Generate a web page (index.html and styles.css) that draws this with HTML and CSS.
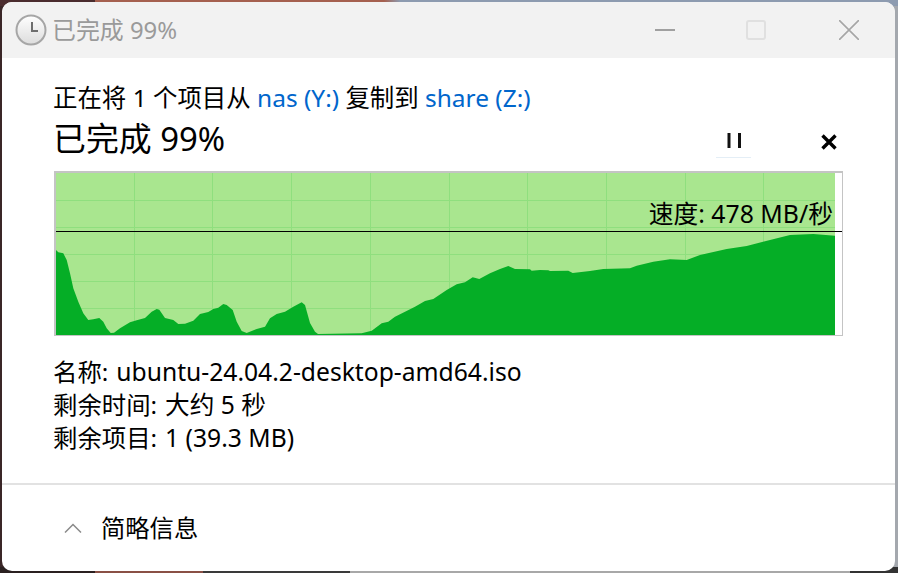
FILE: index.html
```html
<!DOCTYPE html>
<html lang="zh-CN">
<head>
<meta charset="utf-8">
<title>已完成 99%</title>
<link rel="stylesheet" href="styles.css">
</head>
<body>
<div class="window">
  <header class="titlebar">
    <svg class="clock" width="32" height="32" viewBox="0 0 32 32">
      <defs><linearGradient id="face" x1="0" y1="0" x2="0" y2="1"><stop offset="0" stop-color="#ffffff"/><stop offset="1" stop-color="#dcdcdc"/></linearGradient></defs>
      <circle cx="16" cy="16" r="14.5" fill="url(#face)" stroke="#a6a6a6" stroke-width="2"/>
      <path d="M17 8v9h6" fill="none" stroke="#6e6e6e" stroke-width="2"/>
    </svg>
    <span class="title">已完成 99%</span>
    <div class="controls">
      <svg width="20" height="20" viewBox="0 0 20 20"><path d="M0 10h20" stroke="#a0a0a0" stroke-width="2"/></svg>
      <svg class="ctl-max" width="20" height="20" viewBox="0 0 20 20"><rect x="1" y="1" width="18" height="18" rx="2" fill="none" stroke="#e0e0e0" stroke-width="2"/></svg>
      <svg width="20" height="20" viewBox="0 0 20 20"><path d="M0 0l20 20M20 0L0 20" stroke="#a6a6a6" stroke-width="1.6"/></svg>
    </div>
  </header>
  <main class="body">
    <p class="line">正在将 1 个项目从 <span class="link">nas (Y:)</span> 复制到 <span class="link">share (Z:)</span></p>
    <div class="headrow">
      <h1 class="heading">已完成 99%</h1>
      <div class="actions">
        <span class="pause"><svg width="16" height="16" viewBox="0 0 16 16"><path d="M3 0v15M13.5 0v15" stroke="#111" stroke-width="3"/></svg></span>
        <svg class="stop" width="16" height="16" viewBox="0 0 16 16"><path d="M1.5 1.5l13 13M14.5 1.5l-13 13" stroke="#000" stroke-width="3.4"/></svg>
      </div>
    </div>
    <div class="chart">
      <svg class="plot" width="786" height="162" viewBox="56 173 786 162">
        <rect x="56" y="173" width="779" height="162" fill="#a9e68f"/>
        <path d="M134.5 173V335M212.5 173V335M291.5 173V335M370.5 173V335M449.5 173V335M527.5 173V335M606.5 173V335M685.5 173V335M763.5 173V335M56 200.5H835M56 227.5H835M56 254.5H835M56 281.5H835M56 308.5H835" stroke="#8fdf7e" stroke-width="1" fill="none"/>
        <path fill="#05ae26" d="M56 250L58.3 252.3 63.3 253.3 66.7 260 70 273.3 73.3 288.3 78.3 301.7 83.3 313.3 88.3 320 93.3 319.3 99.3 318 103.3 321.7 106.7 328.3 110.7 333 114 332.7 120 328.3 130 322.3 136.7 320.3 145 318 151.7 311.7 156.7 309 159.3 309.7 165 318 173.3 320 178.3 324 185 323.7 193.3 320.7 200 314 208.3 312 213.3 309 218.3 307.7 223.3 304 226.7 305 232.7 310 236.7 321.7 241.7 331 246.7 333 256.7 329 265 326.7 270 318.3 276.7 314 285 311.7 293.3 306.7 301.7 302.3 305 305 310 323 315 331.7 318 334 361.7 333.3 371.7 330.7 381.7 323.3 388.3 321.7 395 316.7 415 306.7 425 301 433.3 299 446.7 290 456.7 284.3 465 282.3 472.7 277.3 479.3 279 490 273.3 500 269 508.3 266 515 269 530 269.3 531.7 270.7 540 270 548.3 270.3 550 271 568.3 270.7 572.7 273 590 271 603.3 269 630 268.3 636.7 265.7 653.3 261.7 670 259.3 686.7 260 700 255 726.7 249 746.7 246 770 240 790 235 813.3 234 835 235.7V335H56Z"/>
        <path d="M56 231.5H842" stroke="#000" stroke-width="1"/>
      </svg>
      <span class="speed">速度: 478 MB/秒</span>
    </div>
    <dl class="details">
      <div class="row"><dt>名称:</dt><dd>ubuntu-24.04.2-desktop-amd64.iso</dd></div>
      <div class="row"><dt>剩余时间:</dt><dd>大约 5 秒</dd></div>
      <div class="row"><dt>剩余项目:</dt><dd>1 (39.3 MB)</dd></div>
    </dl>
  </main>
  <footer class="footer">
    <svg width="18" height="10" viewBox="0 0 18 10"><path d="M1 9.5L9 1.5l8 8" fill="none" stroke="#8a8a8a" stroke-width="1.5"/></svg>
    <span class="toggle">简略信息</span>
  </footer>
</div>
</body>
</html>
```
FILE: styles.css
```css
* { box-sizing: border-box; }
html, body { margin: 0; height: 100%; }
body {
  padding: 2px 3px 2px 2px;
  background:
    linear-gradient(90deg, #4a2c2e 0 95px, #a5604f 95px 384px, #8d9bb0 400px) top / 100% 6px no-repeat,
    linear-gradient(90deg, #2a2020 0 95px, #8a5045 95px 203px, #3a3a3a 203px 350px, #a8a8a8 350px 850px, #333 850px) bottom / 100% 6px no-repeat,
    linear-gradient(90deg, #3a2627 0 50%, #a4a8ae 50%);
  font-family: "Noto Sans", "Noto Sans CJK SC", sans-serif;
  color: #000;
  overflow: hidden;
}
.window {
  height: 569px;
  background: #fff;
  border-radius: 10px;
  overflow: hidden;
  display: flex;
  flex-direction: column;
}
.titlebar {
  height: 56px;
  flex: none;
  background: #f2f2f2;
  display: flex;
  align-items: center;
  padding-left: 13px;
  color: #9a9a9a;
}
.clock { flex: none; margin-right: 5px; }
.title { font-size: 23.9px; line-height: 1; }
.controls {
  margin-left: auto;
  display: flex;
  gap: 72px;
  padding-right: 36px;
}
.ctl-max { margin: 0 1px 0 -1px; }
.body { flex: 1; padding: 25px 52px 0 51px; }
.line {
  margin: 0;
  font-size: 24.45px;
  line-height: 30px;
  white-space: nowrap;
}
.link { color: #0066cc; }
.headrow {
  display: flex;
  align-items: center;
  height: 44px;
  margin-top: 4px;
}
.heading {
  margin: 0;
  font-size: 32.9px;
  font-weight: 400;
  line-height: 44px;
}
.actions {
  margin-left: auto;
  display: flex;
  align-items: center;
  gap: 70px;
  padding: 6px 6px 0 0;
}
.pause {
  display: flex;
  justify-content: center;
  width: 35px;
  margin-top: 7px;
  padding-bottom: 8px;
  border-bottom: 1px solid #e4eef6;
}
.stop { flex: none; }
.chart {
  position: relative;
  width: 789px;
  height: 165px;
  margin: 10px 0 0 1px;
  border: 2px solid #c4c4c4;
  border-bottom-width: 1px;
  border-right-width: 1px;
  background: #fff;
}
.plot { display: block; }
.speed {
  position: absolute;
  right: 9px;
  top: 25px;
  font-size: 24.8px;
  line-height: 30px;
  white-space: nowrap;
}
.details { margin: 19px 0 0; font-size: 24.4px; line-height: 33px; }
.row { display: flex; gap: 8px; white-space: nowrap; }
dt, dd { margin: 0; }
dd { font-size: 24.65px; }
.footer {
  height: 88px;
  flex: none;
  border-top: 2px solid #e2e2e2;
  display: flex;
  align-items: center;
  gap: 19px;
  padding-left: 62px;
}
.toggle { font-size: 24.3px; line-height: 30px; }
```
